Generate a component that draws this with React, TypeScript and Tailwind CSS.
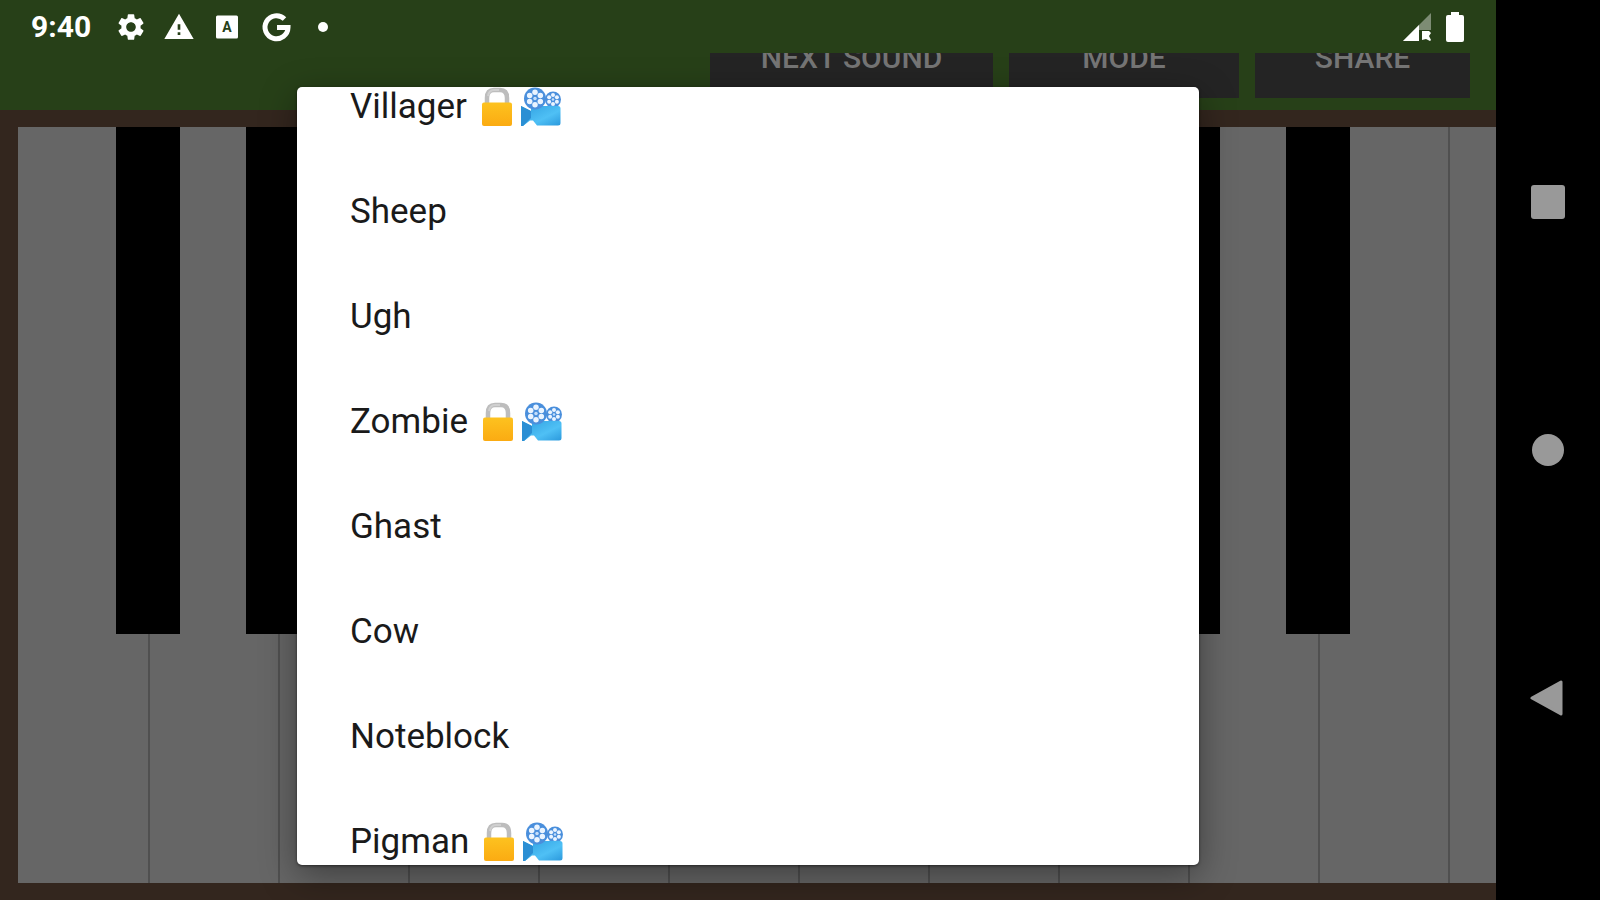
import { MdSettings, MdWarning } from "react-icons/md";

const sounds = [
  { name: "Villager", locked: true },
  { name: "Sheep", locked: false },
  { name: "Ugh", locked: false },
  { name: "Zombie", locked: true },
  { name: "Ghast", locked: false },
  { name: "Cow", locked: false },
  { name: "Noteblock", locked: false },
  { name: "Pigman", locked: true },
];

// white keys starting from F; sharp = black key on the right edge
const keys = [
  { note: "F3", sharp: true },
  { note: "G3", sharp: true },
  { note: "A3", sharp: true },
  { note: "B3", sharp: false },
  { note: "C4", sharp: true },
  { note: "D4", sharp: true },
  { note: "E4", sharp: false },
  { note: "F4", sharp: true },
  { note: "G4", sharp: true },
  { note: "A4", sharp: true },
  { note: "B4", sharp: false },
  { note: "C5", sharp: false },
];

function LockIcon() {
  return (
    <svg viewBox="0 0 32 40" className="h-10 w-8" aria-hidden="true">
      <defs>
        <linearGradient id="lockBody" x1="0" y1="0" x2="0" y2="1">
          <stop offset="0" stopColor="#fdc21f" />
          <stop offset="1" stopColor="#fbab12" />
        </linearGradient>
      </defs>
      <path d="M6 19V11Q6 3 13 3h6Q26 3 26 11V19" fill="none" stroke="#bdbdbd" strokeWidth="4.500" />
      <path d="M7 9Q8 3 13 3h5" fill="none" stroke="#d0d0d0" strokeWidth="2" />
      <rect x="1" y="15.500" width="30" height="23.500" rx="2" fill="url(#lockBody)" />
    </svg>
  );
}

function Reel({ cx, cy, r }: { cx: number; cy: number; r: number }) {
  const holes = [30, 90, 150, 210, 270, 330];
  return (
    <g>
      <circle cx={cx} cy={cy} r={r} fill="#4a8fdc" />
      {holes.map((deg) => (
        <circle
          key={deg}
          cx={cx + Math.cos((deg * Math.PI) / 180) * r * 0.56}
          cy={cy + Math.sin((deg * Math.PI) / 180) * r * 0.56}
          r={r * 0.25}
          fill="#eaf4ff"
        />
      ))}
      <circle cx={cx} cy={cy} r={r * 0.16} fill="#c4defa" />
    </g>
  );
}

function CameraIcon() {
  return (
    <svg viewBox="0 0 40 40" className="size-10" aria-hidden="true">
      <defs>
        <linearGradient id="cameraBody" x1="0" y1="0" x2="1" y2="1">
          <stop offset="0" stopColor="#2f9fe0" />
          <stop offset="0.600" stopColor="#4fc0f5" />
          <stop offset="1" stopColor="#2a98dc" />
        </linearGradient>
      </defs>
      <Reel cx={32} cy={12.5} r={8} />
      <path d="M0 19l10 5v-3q0-2 2-2h25q2.500 0 2.500 2.500V36q0 2.500-2.500 2.500H16l-4-5H9l-7 5.500H0z" fill="url(#cameraBody)" />
      <path d="M0 19l10 5v7l-8 8H0z" fill="#2b8fd4" />
      <Reel cx={14} cy={11.5} r={11} />
    </svg>
  );
}

function StatusBar() {
  return (
    <div className="absolute inset-x-0 top-0 z-20 flex h-[54px] items-center justify-between pr-8 pl-[31px] text-white">
      <div className="flex items-center">
        <span className="w-[84px] text-[30px] leading-8 font-bold">9:40</span>
        <div className="flex items-center gap-4">
          <MdSettings className="size-8" />
          <MdWarning className="size-8" />
          <svg viewBox="0 0 32 32" className="size-8">
            <rect x="5" y="4.500" width="22" height="23" rx="1.500" fill="#fff" />
            <text x="16" y="21" textAnchor="middle" fontSize="14" fontWeight="700" fill="#274018">
              A
            </text>
          </svg>
          <svg viewBox="0 0 32 32" className="size-8">
            <path d="M25.500 8A11.500 11.500 0 1 0 29 16.500H18" fill="none" stroke="#fff" strokeWidth="5" />
          </svg>
          <svg viewBox="0 0 32 32" className="size-8">
            <circle cx="16" cy="16" r="5" fill="#fff" />
          </svg>
        </div>
      </div>
      <div className="flex items-center gap-3.5">
        <svg viewBox="0 0 30 30" className="size-[30px]">
          <path d="M29 1v28H1z" fill="#7d8c74" />
          <path d="M17 13v16H1z" fill="#fff" />
          <path d="M17 18h13v12H17z" fill="#274018" />
          <path d="M20 19h7l2 2-2 3 2 4-1 1-4-2-4 1z" fill="#fff" />
        </svg>
        <svg viewBox="0 0 18 30" className="h-[30px] w-[18px]">
          <path d="M5 0h8v3h3q2 0 2 2v23q0 2-2 2H2q-2 0-2-2V5q0-2 2-2h3z" fill="#fff" />
        </svg>
      </div>
    </div>
  );
}

function Toolbar() {
  const button = "h-20 shrink-0 bg-[#242424] text-[30px] leading-8 font-medium text-[#757575]";
  return (
    <header className="bg-[#274018] pt-[53px]">
      <div className="flex h-[57px] items-end justify-end gap-4 overflow-hidden pr-[26px] pb-3">
        <button className={`${button} w-[283px]`}>NEXT SOUND</button>
        <button className={`${button} w-[230px]`}>MODE</button>
        <button className={`${button} w-[215px]`}>SHARE</button>
      </div>
    </header>
  );
}

function Piano() {
  return (
    <div className="flex min-h-0 flex-1 overflow-hidden border-y-[17px] border-l-[18px] border-[#33261e]">
      {keys.map((key, i) => (
        <div
          key={key.note}
          className={`relative w-[130px] shrink-0 bg-[#666666] ${i > 0 ? "border-l-2 border-[#505050]" : ""}`}
        >
          <button className="block size-full" aria-label={key.note} />
          {key.sharp && (
            <button
              className="absolute top-0 -right-8 z-10 h-[67%] w-16 bg-black"
              aria-label={`${key.note} sharp`}
            />
          )}
        </div>
      ))}
    </div>
  );
}

function SoundDialog() {
  return (
    <div className="absolute inset-0 z-30 flex justify-center pt-[87px] pb-[35px]">
      <div
        role="dialog"
        aria-label="Sounds"
        className="w-[902px] max-w-full overflow-hidden rounded-[5px] bg-white shadow-[0_10px_36px_rgba(0,0,0,0.4),0_1px_3px_rgba(0,0,0,0.5)]"
      >
        <ul className="-mt-[33px]">
          {sounds.map((sound) => (
            <li key={sound.name}>
              <button className="flex h-[105px] w-full items-center px-[53px] text-left text-[35px] leading-10 text-[#1a1a1a]">
                {sound.name}
                {sound.locked && (
                  <span className="ml-3.5 flex gap-2">
                    <LockIcon />
                    <CameraIcon />
                  </span>
                )}
              </button>
            </li>
          ))}
        </ul>
      </div>
    </div>
  );
}

function NavBar() {
  return (
    <nav className="flex w-[104px] shrink-0 flex-col items-center justify-center gap-48 bg-black">
      <button className="flex size-14 items-center justify-center" aria-label="Recent apps">
        <span className="size-[34px] rounded-[3px] bg-[#999999]" />
      </button>
      <button className="flex size-14 items-center justify-center" aria-label="Home">
        <span className="size-8 rounded-full bg-[#999999]" />
      </button>
      <button className="flex size-14 items-center justify-center" aria-label="Back">
        <svg viewBox="0 0 36 36" className="size-9">
          <path d="M2 18L31 2v32z" fill="#999" stroke="#999" strokeWidth="3" strokeLinejoin="round" />
        </svg>
      </button>
    </nav>
  );
}

export default function App() {
  return (
    <div className="flex h-screen overflow-hidden bg-black font-[Roboto,sans-serif]">
      <main className="relative flex min-w-0 flex-1 flex-col">
        <StatusBar />
        <Toolbar />
        <Piano />
        <SoundDialog />
      </main>
      <NavBar />
    </div>
  );
}
